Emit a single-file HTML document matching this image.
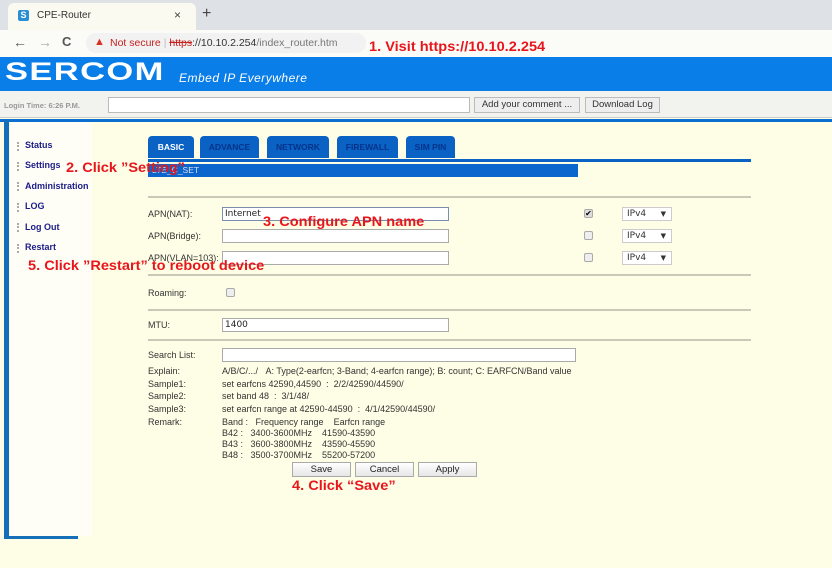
<!DOCTYPE html>
<html><head><meta charset="utf-8"><style>
*{margin:0;padding:0;box-sizing:border-box}
body{width:832px;height:568px;background:#fefee6;position:relative;overflow:hidden;font-family:"Liberation Sans",Arial,sans-serif}
.a{position:absolute}
.ann{position:absolute;color:#e8161c;font-weight:bold;font-size:14px;transform-origin:0 0;transform:scaleX(1.04);white-space:nowrap}
.lbl{position:absolute;font-size:9px;color:#333;white-space:nowrap}
.inp{position:absolute;background:#fff;border:1px solid #aaa;height:14px}
.tab{position:absolute;top:136px;height:22px;background:#0a62c4;border-radius:4px 4px 0 0;color:#05338a;font-size:8.5px;font-weight:bold;text-align:center;line-height:22px}
.side{position:absolute;left:25px;font-size:9px;font-weight:bold;color:#1c1c8a}
.dot{position:absolute;left:17px;width:4px;height:9px;border-left:2px dotted #aaa}
.hr{position:absolute;left:148px;width:603px;height:2px;background:#c9c9b8}
.cb{position:absolute;width:9px;height:9px;border:1px solid #aaa;border-radius:2px;background:#eee}
.sel{position:absolute;width:50px;height:14px;background:#fff;border:1px solid #ccc;font-size:9px;font-family:"DejaVu Sans",sans-serif;padding-left:4px;line-height:12px;color:#333}
.btn{position:absolute;top:462px;height:15px;background:linear-gradient(#fff,#e6e6e6);border:1px solid #aaa;font-size:9.5px;text-align:center;line-height:13px;color:#222}
</style></head><body>
<div class="a" style="left:0;top:0;width:832px;height:30px;background:#dee1e6"></div>
<div class="a" style="left:8px;top:3px;width:188px;height:28px;background:#fbfaf0;border-radius:6px 6px 0 0"></div>
<div class="a" style="left:18px;top:10px;width:11px;height:11px;background:#2a8fd4;border-radius:2px;color:#fff;font-size:9px;font-weight:bold;line-height:11px;text-align:center">S</div>
<div class="a" style="left:37px;top:10px;font-size:10px;color:#333">CPE-Router</div>
<div class="a" style="left:174px;top:8px;font-size:12px;color:#444">×</div>
<div class="a" style="left:202px;top:5px;font-size:16px;color:#444">+</div>
<div class="a" style="left:0;top:30px;width:832px;height:27px;background:#fbfbf7"></div>
<div class="a" style="left:13px;top:34px;font-size:14px;color:#555">←</div>
<div class="a" style="left:38px;top:34px;font-size:14px;color:#aaa">→</div>
<div class="a" style="left:62px;top:34px;font-size:13px;color:#555;font-weight:bold">C</div>
<div class="a" style="left:86px;top:33px;width:280px;height:20px;background:#f1f2f1;border-radius:10px"></div>
<div class="a" style="left:94px;top:36px;font-size:11px;color:#d93025">▲</div>
<div class="a" style="left:110px;top:37px;font-size:10.5px;color:#c5221f">Not secure <span style="color:#bbb">|</span> <span style="text-decoration:line-through">https</span><span style="color:#333">://10.10.2.254</span><span style="color:#777">/index_router.htm</span></div>
<div class="ann" style="left:369px;top:38px">1. Visit https://10.10.2.254</div>
<div class="a" style="left:0;top:57px;width:832px;height:34px;background:#0a7ee8"></div>
<div class="a" style="left:5px;top:58px;font-size:25px;font-weight:900;color:#fff;letter-spacing:1px;transform:scaleX(1.38);transform-origin:0 0">SERCOM</div>
<div class="a" style="left:179px;top:71px;font-size:12px;font-style:italic;color:#fff;letter-spacing:.5px">Embed IP Everywhere</div>
<div class="a" style="left:0;top:91px;width:832px;height:27px;background:#f2f2ee;border-bottom:1px solid #ccc"></div>
<div class="a" style="left:4px;top:101px;font-size:7.5px;color:#999;font-weight:bold">Login Time: 6:26 P.M.</div>
<div class="a" style="left:108px;top:97px;width:362px;height:16px;background:#fff;border:1px solid #bbb"></div>
<div class="a" style="left:474px;top:97px;width:106px;height:16px;background:#eee;border:1px solid #bbb;font-size:9.5px;line-height:14px;text-align:center;color:#333">Add your comment ...</div>
<div class="a" style="left:585px;top:97px;width:75px;height:16px;background:#eee;border:1px solid #bbb;font-size:9.5px;line-height:14px;text-align:center;color:#333">Download Log</div>
<div class="a" style="left:0;top:119px;width:832px;height:3px;background:#0a6fd0"></div>
<div class="a" style="left:4px;top:120px;width:5px;height:419px;background:#1570b8"></div>
<div class="a" style="left:4px;top:536px;width:74px;height:3px;background:#1570b8"></div>
<div class="a" style="left:9px;top:122px;width:83px;height:414px;background:#fefef6"></div>
<div class="dot" style="top:142px"></div><div class="side" style="top:140px">Status</div>
<div class="dot" style="top:162px"></div><div class="side" style="top:160px">Settings</div>
<div class="dot" style="top:182px"></div><div class="side" style="top:181px">Administration</div>
<div class="dot" style="top:203px"></div><div class="side" style="top:201px">LOG</div>
<div class="dot" style="top:223px"></div><div class="side" style="top:222px">Log Out</div>
<div class="dot" style="top:244px"></div><div class="side" style="top:242px">Restart</div>
<div class="tab" style="left:148px;width:46px;color:#fff">BASIC</div>
<div class="tab" style="left:200px;width:59px">ADVANCE</div>
<div class="tab" style="left:267px;width:62px">NETWORK</div>
<div class="tab" style="left:337px;width:61px">FIREWALL</div>
<div class="tab" style="left:406px;width:49px">SIM PIN</div>
<div class="a" style="left:148px;top:159px;width:603px;height:3px;background:#0a62c4"></div>
<div class="a" style="left:148px;top:164px;width:430px;height:13px;background:#0a66cc;color:#dde;font-size:8.5px;line-height:13px;padding-left:4px">LTE_C_SET</div>
<div class="ann" style="left:66px;top:159px">2. Click ”Setting”</div>
<div class="hr" style="top:196px"></div>
<div class="lbl" style="left:148px;top:209px">APN(NAT):</div>
<div class="inp" style="left:222px;top:207px;width:227px;border-color:#7a8fb0;font-size:9px;font-family:'DejaVu Sans',sans-serif;padding-left:2px;line-height:13px;color:#222">Internet</div>
<div class="ann" style="left:263px;top:213px">3. Configure APN name</div>
<div class="lbl" style="left:148px;top:231px">APN(Bridge):</div>
<div class="inp" style="left:222px;top:229px;width:227px"></div>
<div class="lbl" style="left:148px;top:253px">APN(VLAN=103):</div>
<div class="inp" style="left:222px;top:251px;width:227px"></div>
<div class="ann" style="left:28px;top:257px">5. Click ”Restart” to reboot device</div>
<div class="cb" style="left:584px;top:209px;background:#ddd;font-size:8px;line-height:7px;text-align:center">✔</div>
<div class="cb" style="left:584px;top:231px"></div>
<div class="cb" style="left:584px;top:253px"></div>
<div class="sel" style="left:622px;top:207px">IPv4<span style="position:absolute;right:5px;font-size:7px">▼</span></div>
<div class="sel" style="left:622px;top:229px">IPv4<span style="position:absolute;right:5px;font-size:7px">▼</span></div>
<div class="sel" style="left:622px;top:251px">IPv4<span style="position:absolute;right:5px;font-size:7px">▼</span></div>
<div class="hr" style="top:274px"></div>
<div class="lbl" style="left:148px;top:288px">Roaming:</div>
<div class="cb" style="left:226px;top:288px"></div>
<div class="hr" style="top:309px"></div>
<div class="lbl" style="left:148px;top:320px">MTU:</div>
<div class="inp" style="left:222px;top:318px;width:227px;font-size:9px;font-family:'DejaVu Sans',sans-serif;padding-left:2px;line-height:13px;color:#222">1400</div>
<div class="hr" style="top:339px"></div>
<div class="lbl" style="left:148px;top:350px">Search List:</div>
<div class="inp" style="left:222px;top:348px;width:354px"></div>
<div class="lbl" style="left:148px;top:366px">Explain:</div>
<div class="lbl" style="left:222px;top:366px">A/B/C/.../ &nbsp;&nbsp;A: Type(2-earfcn; 3-Band; 4-earfcn range); B: count; C: EARFCN/Band value</div>
<div class="lbl" style="left:148px;top:379px">Sample1:</div>
<div class="lbl" style="left:222px;top:379px">set earfcns 42590,44590 &nbsp;: &nbsp;2/2/42590/44590/</div>
<div class="lbl" style="left:148px;top:391px">Sample2:</div>
<div class="lbl" style="left:222px;top:391px">set band 48 &nbsp;: &nbsp;3/1/48/</div>
<div class="lbl" style="left:148px;top:404px">Sample3:</div>
<div class="lbl" style="left:222px;top:404px">set earfcn range at 42590-44590 &nbsp;: &nbsp;4/1/42590/44590/</div>
<div class="lbl" style="left:148px;top:417px">Remark:</div>
<div class="lbl" style="left:222px;top:417px">Band : &nbsp;&nbsp;Frequency range &nbsp;&nbsp;&nbsp;Earfcn range</div>
<div class="lbl" style="left:222px;top:428px">B42 : &nbsp;&nbsp;3400-3600MHz &nbsp;&nbsp;&nbsp;41590-43590</div>
<div class="lbl" style="left:222px;top:439px">B43 : &nbsp;&nbsp;3600-3800MHz &nbsp;&nbsp;&nbsp;43590-45590</div>
<div class="lbl" style="left:222px;top:450px">B48 : &nbsp;&nbsp;3500-3700MHz &nbsp;&nbsp;&nbsp;55200-57200</div>
<div class="btn" style="left:292px;width:59px">Save</div>
<div class="btn" style="left:355px;width:59px">Cancel</div>
<div class="btn" style="left:418px;width:59px">Apply</div>
<div class="ann" style="left:292px;top:477px">4. Click “Save”</div>
</body></html>
